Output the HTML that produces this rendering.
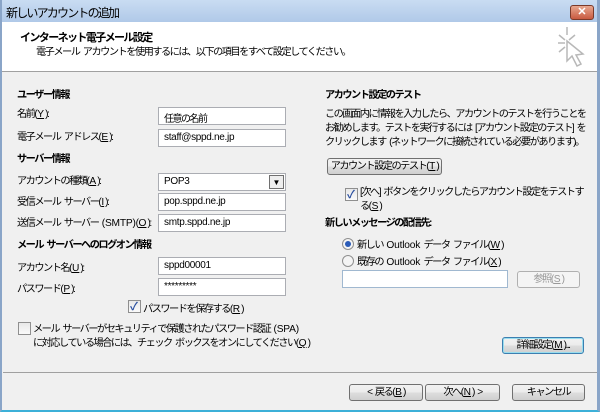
<!DOCTYPE html>
<html><head><meta charset="utf-8"><style>
*{margin:0;padding:0;box-sizing:border-box}
body{width:600px;height:412px;overflow:hidden;background:#f0f0f0;font-family:"Liberation Sans","Noto Sans CJK JP",sans-serif;font-size:10.2px;letter-spacing:-1.5px;word-spacing:2px;color:#000;position:relative}
.a{position:absolute;white-space:nowrap}
.title{left:0;top:0;width:600px;height:22px;background:linear-gradient(#c9dcf2,#b0c9e8);}
.hdr{left:2px;top:22px;width:595px;height:50px;background:#fff;border-bottom:1px solid #a0a0a0}
.frame{left:0;top:0;width:600px;height:412px;border-left:2px solid #8aa5c8;border-right:3px solid #8aa5c8;border-bottom:2px solid #3cb0d8}
.in{position:absolute;background:#fff;border:1px solid #abadb3;height:18px;padding:2px 5px;font-size:10px;letter-spacing:-0.3px}
.btn{position:absolute;border:1px solid #707070;border-radius:3px;background:linear-gradient(#f2f2f2,#ebebeb 50%,#dddddd 51%,#cfcfcf);text-align:center;line-height:15px;height:17px}
.b{font-weight:bold}
.cb{position:absolute;width:13px;height:13px;border:1px solid #8f8f8f;background:linear-gradient(#e8e8e8,#fafafa)}
.cb.on::after{content:"✓";position:absolute;left:1px;top:-3px;color:#2a4fa0;font-size:11px;font-weight:bold;letter-spacing:0}
.rd{position:absolute;width:12px;height:12px;border:1px solid #8f8f8f;border-radius:50%;background:#f4f4f4}
u{text-decoration:underline;margin:0 1px;letter-spacing:0}
.l{letter-spacing:-0.2px}
</style></head><body>
<div class="a title"></div>
<div class="a" style="left:6px;top:4px;font-size:12px;letter-spacing:-1.8px">新しいアカウントの追加</div>
<div class="a" style="left:570px;top:5px;width:24px;height:15px;border:1px solid #7a3a2a;border-radius:3px;background:linear-gradient(#e8a890,#c85a40);color:#fff;font-weight:bold;font-size:11px;text-align:center;line-height:13px;letter-spacing:0">✕</div>
<div class="a hdr"></div>
<div class="a b" style="left:20px;top:29px;font-size:11px;letter-spacing:-1.6px">インターネット電子メール設定</div>
<div class="a" style="left:36px;top:43px">電子メール アカウントを使用するには、以下の項目をすべて設定してください。</div>
<svg class="a" style="left:555px;top:25px" width="30" height="45"><g stroke="#b8b8b8" stroke-width="1.5" fill="none"><path d="M12 2v8M4 10l6 5M20 10l-6 5M3 18h7M4 27l6-5"/><path d="M12 16l0 20 5-5 5 10 4-2-5-9 7-1z" fill="#fff"/></g></svg>

<div class="a b" style="left:17px;top:86px">ユーザー情報</div>
<div class="a" style="left:17px;top:105px">名前(<u>Y</u>):</div>
<div class="in" style="left:158px;top:107px;width:128px;letter-spacing:-1.5px">任意の名前</div>
<div class="a" style="left:17px;top:128px">電子メール アドレス(<u>E</u>):</div>
<div class="in" style="left:158px;top:129px;width:128px">staff@sppd.ne.jp</div>
<div class="a b" style="left:17px;top:150px">サーバー情報</div>
<div class="a" style="left:17px;top:172px">アカウントの種類(<u>A</u>):</div>
<div class="in" style="left:158px;top:173px;width:128px">POP3</div>
<div class="a" style="left:269px;top:175px;width:15px;height:14px;border:1px solid #707070;background:#eee;font-size:8px;text-align:center;line-height:13px;letter-spacing:0">▼</div>
<div class="a" style="left:17px;top:193px">受信メール サーバー(<u>I</u>):</div>
<div class="in" style="left:158px;top:193px;width:128px">pop.sppd.ne.jp</div>
<div class="a" style="left:17px;top:214px">送信メール サーバー <span class="l">(SMTP)</span>(<u>O</u>):</div>
<div class="in" style="left:158px;top:214px;width:128px">smtp.sppd.ne.jp</div>
<div class="a b" style="left:17px;top:236px">メール サーバーへのログオン情報</div>
<div class="a" style="left:17px;top:259px">アカウント名(<u>U</u>):</div>
<div class="in" style="left:158px;top:257px;width:128px">sppd00001</div>
<div class="a" style="left:17px;top:280px">パスワード(<u>P</u>):</div>
<div class="in" style="left:158px;top:278px;width:128px">*********</div>
<div class="cb on" style="left:128px;top:300px"></div>
<div class="a" style="left:143px;top:300px">パスワードを保存する(<u>R</u>)</div>
<div class="cb" style="left:18px;top:322px"></div>
<div class="a" style="left:33px;top:320px">メール サーバーがセキュリティで保護されたパスワード認証 <span class="l">(SPA)</span></div>
<div class="a" style="left:33px;top:334px">に対応している場合には、チェック ボックスをオンにしてください(<u>Q</u>)</div>

<div class="a b" style="left:325px;top:86px">アカウント設定のテスト</div>
<div class="a" style="left:325px;top:108px;line-height:14px">この画面内に情報を入力したら、アカウントのテストを行うことを<br>お勧めします。テストを実行するには [アカウント設定のテスト] を<br>クリックします (ネットワークに接続されている必要があります)。</div>
<div class="btn" style="left:327px;top:158px;width:115px">アカウント設定のテスト(<u>T</u>)</div>
<div class="cb on" style="left:345px;top:188px"></div>
<div class="a" style="left:360px;top:186px;line-height:14px">[次へ] ボタンをクリックしたらアカウント設定をテストす<br>る(<u>S</u>)</div>
<div class="a b" style="left:325px;top:214px">新しいメッセージの配信先:</div>
<div class="rd" style="left:342px;top:238px"><div style="position:absolute;left:2px;top:2px;width:6px;height:6px;border-radius:50%;background:#2a5bb8"></div></div>
<div class="a" style="left:357px;top:236px">新しい <span class="l">Outlook</span> データ ファイル(<u>W</u>)</div>
<div class="rd" style="left:342px;top:255px"></div>
<div class="a" style="left:357px;top:253px">既存の <span class="l">Outlook</span> データ ファイル(<u>X</u>)</div>
<div class="in" style="left:342px;top:270px;width:166px;border-color:#a0b8d0"></div>
<div class="btn" style="left:517px;top:271px;width:63px;color:#999;border-color:#b0b0b0;background:#f4f4f4">参照(<u>S</u>)</div>
<div class="btn" style="left:502px;top:337px;width:82px;border-color:#3c7fb1;box-shadow:inset 0 0 0 1px #9de">詳細設定(<u>M</u>)...</div>

<div class="a" style="left:3px;top:372px;width:594px;border-top:1px solid #a0a0a0"></div>
<div class="btn" style="left:349px;top:384px;width:74px">&lt; 戻る(<u>B</u>)</div>
<div class="btn" style="left:425px;top:384px;width:75px">次へ(<u>N</u>) &gt;</div>
<div class="btn" style="left:512px;top:384px;width:73px">キャンセル</div>
<div class="a frame"></div>
</body></html>
